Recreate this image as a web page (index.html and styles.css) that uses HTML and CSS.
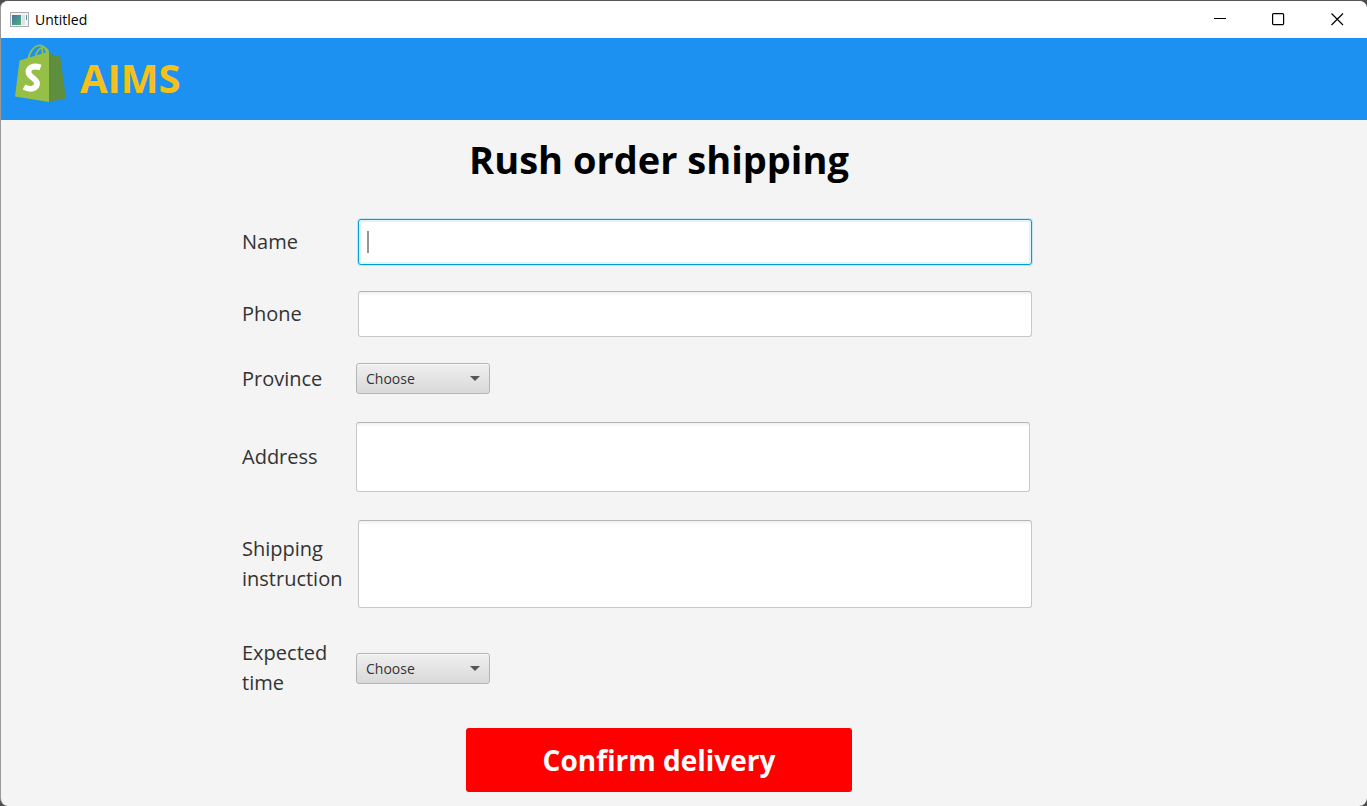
FILE: index.html
```html
<!DOCTYPE html>
<html lang="en">
<head>
  <meta charset="utf-8">
  <title>Untitled</title>
  <link rel="stylesheet" href="styles.css">
</head>
<body>
<div class="window">
  <div class="titlebar">
    <svg class="titlebar-icon" width="20" height="16" viewBox="0 0 20 16" aria-hidden="true">
      <defs>
        <linearGradient id="pane" x1="0" y1="0" x2="1" y2="1">
          <stop offset="0" stop-color="#3f74a0"/>
          <stop offset="1" stop-color="#55b07c"/>
        </linearGradient>
      </defs>
      <rect x="0.5" y="0.5" width="18" height="14" fill="#f4f4f4" stroke="#a9adb3"/>
      <rect x="2" y="3" width="9" height="10" fill="url(#pane)"/>
      <rect x="12" y="3" width="3" height="10" fill="#dfe3e6"/>
      <rect x="16" y="3" width="1" height="5" fill="#5a9c9c"/>
    </svg>
    <span class="titlebar-text">Untitled</span>
    <div class="titlebar-controls">
      <button class="win-button" type="button" aria-label="Minimize">
        <svg width="13" height="13" viewBox="0 0 13 13"><path d="M1 5.5h12" stroke="#000" fill="none"/></svg>
      </button>
      <button class="win-button" type="button" aria-label="Maximize">
        <svg width="13" height="13" viewBox="0 0 13 13"><rect x="0.600" y="0.600" width="11" height="11" rx="1" stroke="#000" stroke-width="1.200" fill="none"/></svg>
      </button>
      <button class="win-button" type="button" aria-label="Close">
        <svg width="13" height="13" viewBox="0 0 13 13"><path d="M.5.5l11.500 11.500M12 .5L.5 12" stroke="#000" stroke-width="1.200" fill="none"/></svg>
      </button>
    </div>
  </div>

  <header class="brand">
    <svg class="brand-logo" width="52" height="60" viewBox="0 0 52 60" aria-hidden="true">
      <path d="M13 17C14 8 19 2 24 1.500c4-.3 7 3 8 8.500M20 15c1-7 4-11 8-11.500 3-.2 5 2 5.500 6M27.500 13c0-4 .5-8-1-10.500" fill="none" stroke="#95bf47" stroke-width="1.700"/>
      <path d="M4.500 16.500L34 7.500V58L0 52.500z" fill="#95bf47"/>
      <path d="M34 7.500l4.500 4H45l6 43L34 58z" fill="#5e8e3e"/>
      <path d="M25.500 23.500c-7-2.500-12 0-12 4.500 0 5.500 8.500 6 8.500 11.500 0 5-6.500 7-13 3.500" fill="none" stroke="#fff" stroke-width="5.800"/>
    </svg>
    <span class="brand-name">AIMS</span>
  </header>

  <main class="content">
    <form class="order">
      <h1 class="order-title">Rush order shipping</h1>
      <div class="fields">
        <div class="row">
          <label class="label" for="name">Name</label>
          <input class="field field--active" id="name" type="text" autofocus>
        </div>
        <div class="row">
          <label class="label" for="phone">Phone</label>
          <input class="field" id="phone" type="tel">
        </div>
        <div class="row row--near">
          <label class="label" for="province">Province</label>
          <div class="choice"><select class="select" id="province"><option>Choose</option></select></div>
        </div>
        <div class="row row--near row--area">
          <label class="label" for="address">Address</label>
          <textarea class="field field--medium" id="address"></textarea>
        </div>
        <div class="row row--area">
          <label class="label" for="instruction">Shipping instruction</label>
          <textarea class="field field--tall" id="instruction"></textarea>
        </div>
        <div class="row row--near row--time">
          <label class="label" for="time">Expected time</label>
          <div class="choice"><select class="select" id="time"><option>Choose</option></select></div>
        </div>
      </div>
      <button class="confirm" type="button">Confirm delivery</button>
    </form>
  </main>
</div>
</body>
</html>
```
FILE: styles.css
```css
* { box-sizing: border-box; }

body {
  margin: 0;
  background: #4d4d4d;
  font-family: "Open Sans", "Noto Sans", sans-serif;
  color: #333;
}

.window {
  display: flex;
  flex-direction: column;
  min-height: 100vh;
  overflow: hidden;
  border-top: 1px solid #555;
  border-left: 1px solid #999;
  border-radius: 8px;
  background: #f4f4f4;
}

.titlebar {
  display: flex;
  align-items: center;
  height: 37px;
  padding-left: 9px;
  background: #fff;
  color: #000;
}

.titlebar-text {
  margin-left: 5px;
  font-size: 14px;
}

.titlebar-controls {
  display: flex;
  margin-left: auto;
  height: 100%;
}

.win-button {
  display: grid;
  place-items: center;
  width: 59px;
  padding: 0;
  border: 0;
  background: none;
}

.brand {
  display: flex;
  align-items: flex-start;
  gap: 13px;
  height: 82px;
  padding: 6px 14px;
  background: #1c91f2;
}

.brand-name {
  color: #f5c118;
  font-size: 40px;
  font-weight: 700;
  line-height: 68px;
}

.content {
  flex: 1;
  padding: 11px 50px 12px 0;
}

.order {
  display: flex;
  flex-direction: column;
  align-items: center;
  max-width: 834px;
  margin: 0 auto;
}

.order-title {
  margin: 0;
  color: #000;
  font-size: 38px;
  font-weight: 700;
  line-height: 56px;
}

.fields {
  display: flex;
  flex-direction: column;
  gap: 26px;
  width: 100%;
  margin-top: 32px;
  padding-right: 44px;
}

.row {
  display: grid;
  grid-template-columns: 116px minmax(0, 674px);
  align-items: center;
}

.row--near { grid-template-columns: 114px minmax(0, 674px); }
.row--area { padding-top: 2px; }
.row--time { padding-top: 4px; }

.label {
  font-size: 20px;
  line-height: 30px;
}

.field {
  display: block;
  width: 100%;
  height: 46px;
  padding: 8px 10px;
  border: 1px solid #c8c8c8;
  border-top-color: #b5b5b5;
  border-radius: 3px;
  outline: none;
  resize: none;
  background: linear-gradient(#f0f0f0, #fff 4px);
  color: #333;
  font: inherit;
  font-size: 20px;
}

.field--medium { height: 70px; }
.field--tall { height: 88px; }

.field--active {
  border-color: #039ed3;
  box-shadow: 0 0 0 1px #c4e5f2, inset 0 0 0 2px #e3f3f9;
  background: linear-gradient(#969696, #969696) 8px center / 2px 22px no-repeat #fff;
  caret-color: transparent;
}

.choice {
  position: relative;
  width: 134px;
}

.choice::after {
  content: "";
  position: absolute;
  top: 13px;
  right: 10px;
  border: 5px solid transparent;
  border-top-color: #555;
  border-bottom: 0;
  pointer-events: none;
}

.select {
  display: block;
  width: 100%;
  height: 31px;
  padding: 0 9px;
  appearance: none;
  border: 1px solid #b5b5b5;
  border-radius: 3px;
  background: linear-gradient(#efefef, #d9d9d9);
  box-shadow: inset 0 1px 0 #f8f8f8;
  color: #333;
  font: inherit;
  font-size: 14px;
}

.confirm {
  width: 386px;
  height: 64px;
  margin-top: 30px;
  border: 0;
  border-radius: 3px;
  background: #f00;
  color: #fff;
  font: inherit;
  font-size: 28px;
  font-weight: 700;
}
```
